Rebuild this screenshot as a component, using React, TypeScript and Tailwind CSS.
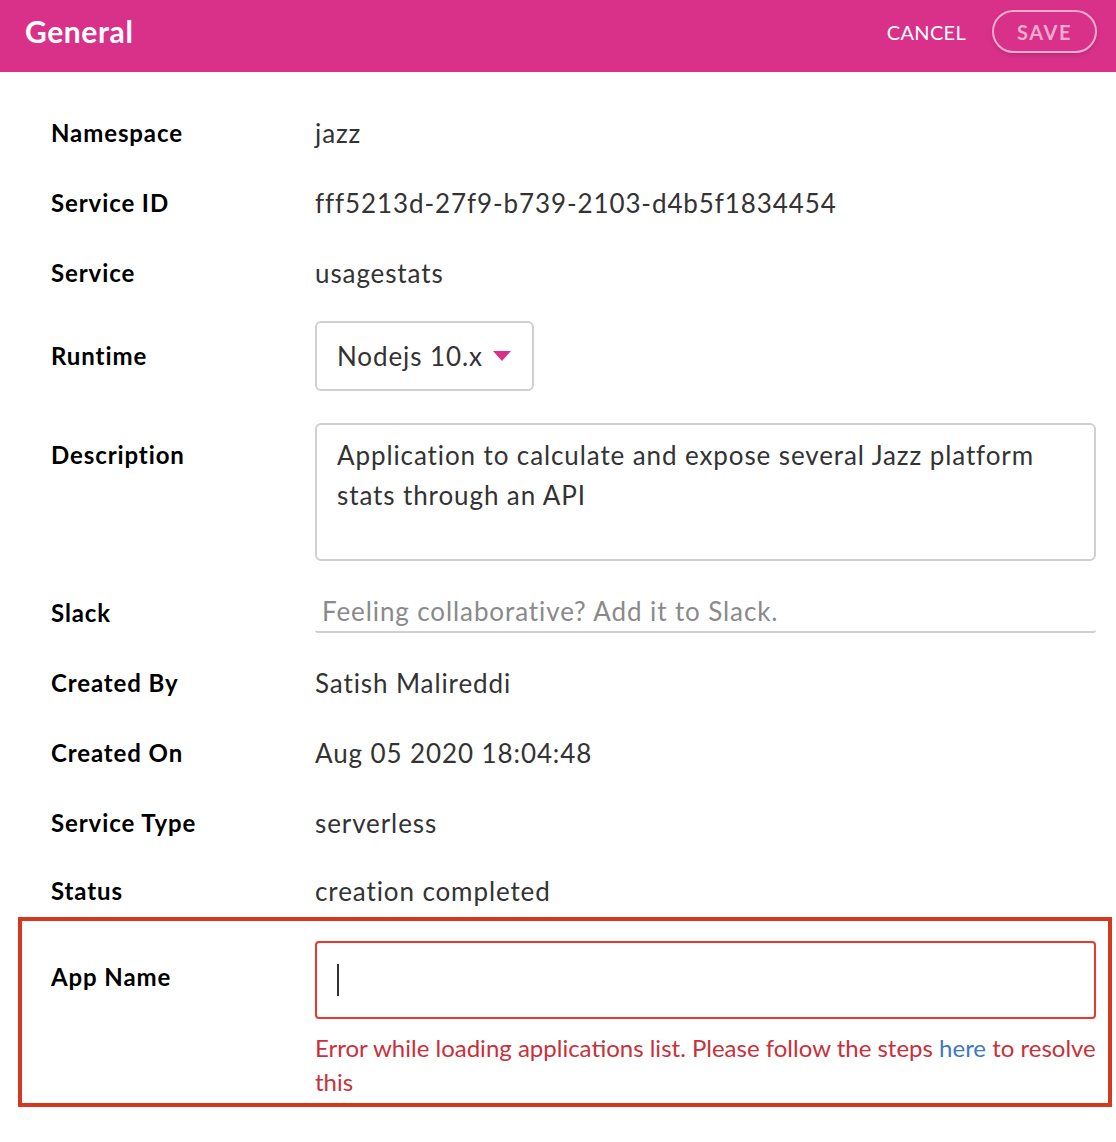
import React from "react";

const font = { fontFamily: "Lato, 'Open Sans', sans-serif" };

function Row({ label, value }: { label: string; value: string }) {
  return (
    <div className="flex h-[70px] items-center">
      <div className="w-[264px] shrink-0 text-[24px] font-bold tracking-[0.9px] text-black">{label}</div>
      <div className="flex-1 text-[26px] tracking-[0.9px] text-[#333]">{value}</div>
    </div>
  );
}

export default function App() {
  return (
    <div style={font} className="min-h-screen w-[1116px] bg-white">
      <header className="flex h-[72px] items-center justify-between bg-[#d93189] pb-[9px] pl-[25px] pr-[19px]">
        <h1 className="text-[30px] font-bold tracking-[0.6px] text-white">General</h1>
        <div className="flex items-center gap-[26px]">
          <button className="text-[20px] tracking-[0.3px] text-white">CANCEL</button>
          <button className="h-[43px] w-[105px] rounded-full border-2 border-white/60 text-[20px] font-bold tracking-[1.5px] text-white/60 shadow-[0_2px_4px_rgba(0,0,0,0.15)]">
            SAVE
          </button>
        </div>
      </header>

      <main className="pl-[51px] pr-[20px] pt-[26px]">
        <Row label="Namespace" value="jazz" />
        <Row label="Service ID" value="fff5213d-27f9-b739-2103-d4b5f1834454" />
        <Row label="Service" value="usagestats" />

        <div className="mt-[13px] flex items-center">
          <div className="w-[264px] shrink-0 text-[24px] font-bold tracking-[0.9px] text-black">Runtime</div>
          <div className="flex h-[70px] w-[219px] items-center gap-[10px] rounded-[6px] border-2 border-[#d0d0d0] pl-[20px] text-[26px] tracking-[0.9px] text-[#333]">
            <span>Nodejs 10.x</span>
            <svg width="18" height="10" viewBox="0 0 18 10">
              <path d="M0 0 L18 0 L9 10 Z" fill="#d93189" />
            </svg>
          </div>
        </div>

        <div className="mt-[32px] flex items-start">
          <div className="w-[264px] shrink-0 pt-[12px] text-[24px] font-bold leading-[40px] tracking-[0.9px] text-black">Description</div>
          <div className="h-[138px] flex-1 rounded-[6px] border-2 border-[#d0d0d0] px-[20px] pt-[10px] text-[26px] leading-[40px] tracking-[0.9px] text-[#333]">
            Application to calculate and expose several Jazz platform stats through an API
          </div>
        </div>

        <div className="mt-[31px] flex items-center">
          <div className="w-[264px] shrink-0 text-[24px] font-bold tracking-[0.9px] text-black">Slack</div>
          <div className="flex h-[41px] flex-1 items-center rounded-b-[3px] border-b-2 border-[#cfcfcf] pl-[7px] text-[26px] tracking-[0.9px] text-[#8a8a8a]">
            Feeling collaborative? Add it to Slack.
          </div>
        </div>

        <div className="mt-[15px]">
          <Row label="Created By" value="Satish Malireddi" />
          <Row label="Created On" value="Aug 05 2020 18:04:48" />
          <Row label="Service Type" value="serverless" />
        </div>
        <div className="flex h-[59px] items-start pt-[18px] leading-[30px]">
          <div className="w-[264px] shrink-0 text-[24px] font-bold tracking-[0.9px] text-black">Status</div>
          <div className="flex-1 text-[26px] tracking-[0.9px] text-[#333]">creation completed</div>
        </div>

        <div className="-ml-[33px] -mr-[16px] flex items-start border-4 border-[#d4381f] pb-[4px] pl-[29px] pr-[12px] pt-[20px]">
          <div className="w-[264px] shrink-0 pt-[21px] text-[24px] font-bold leading-[30px] tracking-[0.9px] text-black">App Name</div>
          <div className="flex-1">
            <div className="flex h-[78px] items-center rounded-[4px] border-2 border-[#e8392b] pl-[20px]">
              <div className="h-[32px] w-[2px] bg-[#333]" />
            </div>
            <p className="mt-[12px] text-[24px] leading-[34px] text-[#c9303a]">
              Error while loading applications list. Please follow the steps{" "}
              <a className="text-[#3d78c4]">here</a> to resolve this
            </p>
          </div>
        </div>
      </main>
    </div>
  );
}
